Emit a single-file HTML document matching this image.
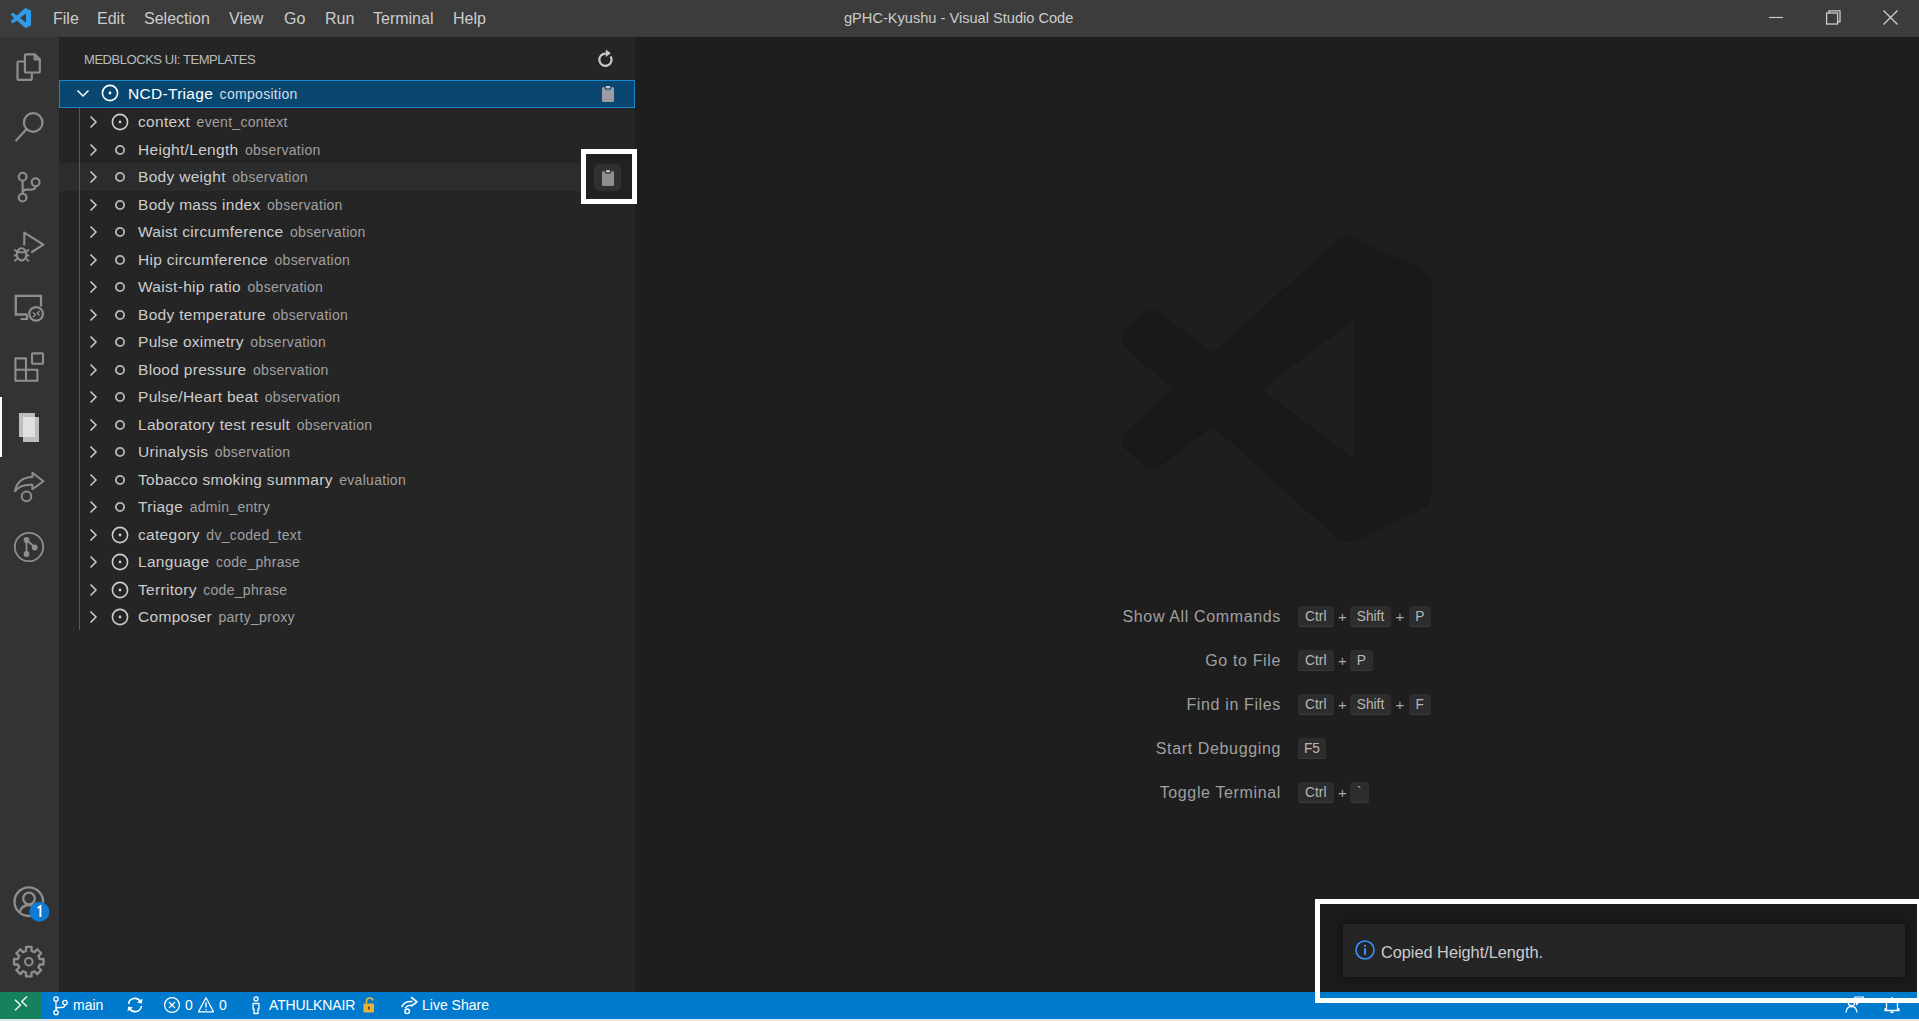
<!DOCTYPE html>
<html><head><meta charset="utf-8">
<style>
*{box-sizing:border-box;margin:0;padding:0}
html,body{width:1919px;height:1021px;overflow:hidden;background:#1e1e1e;font-family:"Liberation Sans",sans-serif;position:relative}
.abs{position:absolute}
.ico{position:absolute}
#title{left:0;top:0;width:1919px;height:37px;background:#3c3c3c}
.menu{position:absolute;top:0;height:37px;line-height:37px;color:#cccccc;font-size:16px;white-space:nowrap}
#act{left:0;top:37px;width:59px;height:955px;background:#333333}
#side{left:59px;top:37px;width:576px;height:955px;background:#252526}
#editor{left:635px;top:37px;width:1284px;height:955px;background:#1e1e1e}
#status{left:0;top:992px;width:1919px;height:26.5px;background:#007acc}
#bottomstrip{left:0;top:1018.5px;width:1919px;height:3px;background:#dfe9ee}
.row{position:absolute;left:59px;width:576px;height:27.5px;white-space:nowrap}
.row.sel{background:#094771;outline:1px solid #1a84cc;outline-offset:-1px;height:28px}
.row.hov{background:#2b2c2e}
.lbl{position:absolute;top:0;line-height:27.5px;font-size:15.5px;letter-spacing:0.3px}
.desc{font-size:14px;margin-left:6.5px;letter-spacing:0.3px}
.sc{position:absolute;left:900px;width:381px;text-align:right;font-size:16px;letter-spacing:0.64px;color:#a0a0a0;white-space:nowrap;line-height:22px}
.key{position:absolute;height:21.5px;line-height:21px;font-size:13.75px;color:#b8b8b8;background:#2d2d2d;border-radius:3.5px;box-shadow:inset 0 -1px 0 #3a3a3a;text-align:center}
.plus{position:absolute;font-size:15px;color:#a8a8a8;line-height:21.5px}
.st{position:absolute;top:992px;height:26.5px;line-height:26.5px;color:#ffffff;font-size:14px;white-space:nowrap}
</style></head><body>
<div id="title" class="abs">
  <svg class="abs" style="left:11px;top:8px" width="20" height="20" viewBox="0 0 24 24"><path fill="#2f9ae8" d="M23.15 2.587L18.21.21a1.494 1.494 0 0 0-1.705.29l-9.46 8.63-4.12-3.128a.999.999 0 0 0-1.276.057L.327 7.261A1 1 0 0 0 .326 8.74L3.899 12 .326 15.26a1 1 0 0 0 .001 1.479L1.65 17.94a.999.999 0 0 0 1.276.057l4.12-3.128 9.46 8.63a1.492 1.492 0 0 0 1.704.29l4.942-2.377A1.5 1.5 0 0 0 24 20.06V3.939a1.5 1.5 0 0 0-.85-1.352zm-5.146 14.861L10.826 12l7.178-5.448v10.896z"/></svg>
  <span class="menu" style="left:53px">File</span>
  <span class="menu" style="left:97px">Edit</span>
  <span class="menu" style="left:144px">Selection</span>
  <span class="menu" style="left:229px">View</span>
  <span class="menu" style="left:284px">Go</span>
  <span class="menu" style="left:325px">Run</span>
  <span class="menu" style="left:373px">Terminal</span>
  <span class="menu" style="left:453px">Help</span>
  <span class="menu" style="left:844px;font-size:14.6px">gPHC-Kyushu - Visual Studio Code</span>
  <svg class="abs" style="left:1768px;top:10px" width="16" height="16" viewBox="0 0 16 16"><path d="M1 7.5 H15" stroke="#cccccc" stroke-width="1.2"/></svg>
  <svg class="abs" style="left:1825px;top:9px" width="17" height="17" viewBox="0 0 17 17"><rect x="1.6" y="4" width="11" height="11" fill="none" stroke="#cccccc" stroke-width="1.3"/><path d="M4 4 V1.8 H15 V12.8 H12.6" fill="none" stroke="#cccccc" stroke-width="1.3"/></svg>
  <svg class="abs" style="left:1882px;top:9px" width="17" height="17" viewBox="0 0 17 17"><path d="M1.5 1.5 L15.5 15.5 M15.5 1.5 L1.5 15.5" stroke="#cccccc" stroke-width="1.4"/></svg>
</div>
<div id="act" class="abs"></div>
<div id="side" class="abs"></div>
<div id="editor" class="abs"></div>
<svg class="abs" style="left:0;top:37px" width="59" height="60" viewBox="0 37 59 60"><path d="M24.9 61.5 H18.6 Q17.5 61.5 17.5 62.6 V78.8 Q17.5 79.9 18.6 79.9 H30.7 Q31.8 79.9 31.8 78.8 V72.6" fill="none" stroke="#8e8e8e" stroke-width="2.2"/><path d="M26 54.3 H34.7 L39.8 59.4 V71.4 Q39.8 72.5 38.7 72.5 H26 Q24.9 72.5 24.9 71.4 V55.4 Q24.9 54.3 26 54.3 Z M34.7 54.3 V59.4 H39.8" fill="none" stroke="#8e8e8e" stroke-width="2.2" stroke-linejoin="round"/></svg>
<svg class="abs" style="left:0;top:97px" width="59" height="60" viewBox="0 97 59 60"><circle cx="33.2" cy="122.5" r="9.3" fill="none" stroke="#8e8e8e" stroke-width="2.2"/><path d="M26.4 129.3 L16.2 140.5" stroke="#8e8e8e" stroke-width="2.2" stroke-linecap="round"/></svg>
<svg class="abs" style="left:0;top:157px" width="59" height="60" viewBox="0 157 59 60"><circle cx="22.6" cy="176.7" r="3.9" fill="none" stroke="#8e8e8e" stroke-width="2.1"/><circle cx="22.6" cy="197.6" r="3.9" fill="none" stroke="#8e8e8e" stroke-width="2.1"/><circle cx="35.6" cy="182.2" r="3.9" fill="none" stroke="#8e8e8e" stroke-width="2.1"/><path d="M22.6 180.6 V193.7 M35.6 186.1 Q35.6 189.6 31.5 189.6 H26.5 Q22.6 189.6 22.6 193.5" fill="none" stroke="#8e8e8e" stroke-width="2.1"/></svg>
<svg class="abs" style="left:0;top:217px" width="59" height="60" viewBox="0 217 59 60"><path d="M24.3 245.5 V232.6 L43.4 244.7 L31.2 252.5" fill="none" stroke="#8e8e8e" stroke-width="2.1" stroke-linejoin="round"/><ellipse cx="21.6" cy="254.4" rx="4.8" ry="6.1" fill="none" stroke="#8e8e8e" stroke-width="2.1"/><path d="M16.8 252.2 H26.4 M14.3 249.6 L16.9 251.6 M28.9 249.6 L26.3 251.6 M14 255.5 H16.8 M26.4 255.5 H29.2 M14.3 261.2 L17.2 258.6 M28.9 261.2 L26 258.6" stroke="#8e8e8e" stroke-width="1.9"/></svg>
<svg class="abs" style="left:0;top:277px" width="59" height="60" viewBox="0 277 59 60"><path d="M27.5 314.5 H15.8 V295.8 H41 V306.5" fill="none" stroke="#8e8e8e" stroke-width="2.3"/><path d="M20.6 319 H27 V315" fill="none" stroke="#8e8e8e" stroke-width="2.2"/><circle cx="36.1" cy="313.9" r="6.8" fill="none" stroke="#8e8e8e" stroke-width="2.2"/><path d="M33.1 312.5 L35.4 314.8 L33.1 317.1 M39.6 311 L37.3 313.3 L39.6 315.6" fill="none" stroke="#8e8e8e" stroke-width="1.4"/></svg>
<svg class="abs" style="left:0;top:337px" width="59" height="60" viewBox="0 337 59 60"><path d="M15.4 358.4 H26 V380.8 H15.4 Z M15.4 369.8 H37.4 V380.8 H26" fill="none" stroke="#8e8e8e" stroke-width="2.1" stroke-linejoin="round"/><rect x="32" y="353.4" width="11" height="10.3" rx="0.8" fill="none" stroke="#8e8e8e" stroke-width="2.1"/></svg>
<div class="abs" style="left:0;top:397px;width:2px;height:60px;background:#ffffff"></div>
<div class="abs" style="left:18.8px;top:412.7px;width:16.2px;height:24px;background:rgba(236,236,236,0.75)"></div><div class="abs" style="left:22.7px;top:417px;width:16.5px;height:24.6px;background:rgba(236,236,236,0.75)"></div>
<svg class="abs" style="left:0;top:457px" width="59" height="60" viewBox="0 457 59 60"><path d="M15 491.2 Q17.5 477.5 32.4 477 V472.8 L43.4 481.3 L32.4 489.2 V484.8 Q20.5 484 15 491.2 Z" fill="none" stroke="#8e8e8e" stroke-width="2" stroke-linejoin="round"/><circle cx="26.5" cy="496.4" r="4.8" fill="none" stroke="#8e8e8e" stroke-width="2"/></svg>
<svg class="abs" style="left:0;top:517px" width="59" height="60" viewBox="0 517 59 60"><circle cx="29" cy="547" r="14.2" fill="none" stroke="#8e8e8e" stroke-width="1.8"/><path d="M26.5 540 V554 M26.5 540 L34.7 547" stroke="#8e8e8e" stroke-width="1.8"/><circle cx="26.5" cy="540" r="2.9" fill="#8e8e8e"/><circle cx="26.5" cy="554" r="2.9" fill="#8e8e8e"/><circle cx="34.7" cy="547.5" r="2.9" fill="#8e8e8e"/></svg>
<svg class="abs" style="left:0;top:872px" width="59" height="60" viewBox="0 872 59 60"><circle cx="28.8" cy="901.7" r="14.3" fill="none" stroke="#8e8e8e" stroke-width="2.3"/><circle cx="29" cy="898.5" r="5.8" fill="none" stroke="#8e8e8e" stroke-width="2.3"/><path d="M19.5 912.5 Q21.5 905 29 905 Q36.5 905 38.5 912.5" fill="none" stroke="#8e8e8e" stroke-width="2.3"/><circle cx="39.4" cy="911.7" r="10" fill="#0e7ad1"/><path d="M37.6 908 L40.4 906.2 V917" fill="none" stroke="#ffffff" stroke-width="1.9"/></svg>
<svg class="abs" style="left:0;top:932px" width="59" height="60" viewBox="0 932 59 60"><path d="M26.14 950.82 L25.97 946.97 L31.63 946.97 L31.46 950.82 L34.61 952.12 L37.21 949.28 L41.22 953.29 L38.38 955.89 L39.68 959.04 L43.53 958.87 L43.53 964.53 L39.68 964.36 L38.38 967.51 L41.22 970.11 L37.21 974.12 L34.61 971.28 L31.46 972.58 L31.63 976.43 L25.97 976.43 L26.14 972.58 L22.99 971.28 L20.39 974.12 L16.38 970.11 L19.22 967.51 L17.92 964.36 L14.07 964.53 L14.07 958.87 L17.92 959.04 L19.22 955.89 L16.38 953.29 L20.39 949.28 L22.99 952.12 Z" fill="none" stroke="#8e8e8e" stroke-width="2.3" stroke-linejoin="round"/><circle cx="28.8" cy="961.7" r="3.8" fill="none" stroke="#8e8e8e" stroke-width="2"/></svg>
<div class="abs" style="left:84px;top:51px;font-size:13px;letter-spacing:-0.45px;color:#bbbbbb;white-space:nowrap;line-height:18px">MEDBLOCKS UI: TEMPLATES</div>
<div class="row sel" style="top:80px"><svg class="ico" style="left:17px;top:7px" width="14" height="12" viewBox="0 0 14 12"><path d="M1.5 3.5 L7 9 L12.5 3.5" fill="none" stroke="#ffffff" stroke-width="1.5"/></svg><svg class="ico" style="left:42px;top:4px" width="18" height="18" viewBox="0 0 18 18"><circle cx="9" cy="9" r="7.6" fill="none" stroke="#ffffff" stroke-width="1.6"/><circle cx="9" cy="9" r="1.4" fill="#ffffff"/></svg><span class="lbl" style="left:69px;color:#ffffff">NCD-Triage<span class="desc" style="color:#d5dde3">composition</span></span></div>
<div class="row" style="top:108.0px"><svg class="ico" style="left:29px;top:7px" width="12" height="14" viewBox="0 0 12 14"><path d="M2.5 1.5 L8 7 L2.5 12.5" fill="none" stroke="#cccccc" stroke-width="1.5"/></svg><svg class="ico" style="left:52px;top:5px" width="18" height="18" viewBox="0 0 18 18"><circle cx="9" cy="9" r="7.6" fill="none" stroke="#cccccc" stroke-width="1.6"/><circle cx="9" cy="9" r="1.4" fill="#cccccc"/></svg><span class="lbl" style="left:79px;color:#cccccc">context<span class="desc" style="color:#a0a0a0">event_context</span></span></div>
<div class="row" style="top:135.5px"><svg class="ico" style="left:29px;top:7px" width="12" height="14" viewBox="0 0 12 14"><path d="M2.5 1.5 L8 7 L2.5 12.5" fill="none" stroke="#cccccc" stroke-width="1.5"/></svg><svg class="ico" style="left:55px;top:8px" width="12" height="12" viewBox="0 0 12 12"><circle cx="6" cy="6" r="4.1" fill="none" stroke="#b8b8b8" stroke-width="1.8"/></svg><span class="lbl" style="left:79px;color:#cccccc">Height/Length<span class="desc" style="color:#a0a0a0">observation</span></span></div>
<div class="row hov" style="top:163.0px"><svg class="ico" style="left:29px;top:7px" width="12" height="14" viewBox="0 0 12 14"><path d="M2.5 1.5 L8 7 L2.5 12.5" fill="none" stroke="#cccccc" stroke-width="1.5"/></svg><svg class="ico" style="left:55px;top:8px" width="12" height="12" viewBox="0 0 12 12"><circle cx="6" cy="6" r="4.1" fill="none" stroke="#b8b8b8" stroke-width="1.8"/></svg><span class="lbl" style="left:79px;color:#cccccc">Body weight<span class="desc" style="color:#a0a0a0">observation</span></span></div>
<div class="row" style="top:190.5px"><svg class="ico" style="left:29px;top:7px" width="12" height="14" viewBox="0 0 12 14"><path d="M2.5 1.5 L8 7 L2.5 12.5" fill="none" stroke="#cccccc" stroke-width="1.5"/></svg><svg class="ico" style="left:55px;top:8px" width="12" height="12" viewBox="0 0 12 12"><circle cx="6" cy="6" r="4.1" fill="none" stroke="#b8b8b8" stroke-width="1.8"/></svg><span class="lbl" style="left:79px;color:#cccccc">Body mass index<span class="desc" style="color:#a0a0a0">observation</span></span></div>
<div class="row" style="top:218.0px"><svg class="ico" style="left:29px;top:7px" width="12" height="14" viewBox="0 0 12 14"><path d="M2.5 1.5 L8 7 L2.5 12.5" fill="none" stroke="#cccccc" stroke-width="1.5"/></svg><svg class="ico" style="left:55px;top:8px" width="12" height="12" viewBox="0 0 12 12"><circle cx="6" cy="6" r="4.1" fill="none" stroke="#b8b8b8" stroke-width="1.8"/></svg><span class="lbl" style="left:79px;color:#cccccc">Waist circumference<span class="desc" style="color:#a0a0a0">observation</span></span></div>
<div class="row" style="top:245.5px"><svg class="ico" style="left:29px;top:7px" width="12" height="14" viewBox="0 0 12 14"><path d="M2.5 1.5 L8 7 L2.5 12.5" fill="none" stroke="#cccccc" stroke-width="1.5"/></svg><svg class="ico" style="left:55px;top:8px" width="12" height="12" viewBox="0 0 12 12"><circle cx="6" cy="6" r="4.1" fill="none" stroke="#b8b8b8" stroke-width="1.8"/></svg><span class="lbl" style="left:79px;color:#cccccc">Hip circumference<span class="desc" style="color:#a0a0a0">observation</span></span></div>
<div class="row" style="top:273.0px"><svg class="ico" style="left:29px;top:7px" width="12" height="14" viewBox="0 0 12 14"><path d="M2.5 1.5 L8 7 L2.5 12.5" fill="none" stroke="#cccccc" stroke-width="1.5"/></svg><svg class="ico" style="left:55px;top:8px" width="12" height="12" viewBox="0 0 12 12"><circle cx="6" cy="6" r="4.1" fill="none" stroke="#b8b8b8" stroke-width="1.8"/></svg><span class="lbl" style="left:79px;color:#cccccc">Waist-hip ratio<span class="desc" style="color:#a0a0a0">observation</span></span></div>
<div class="row" style="top:300.5px"><svg class="ico" style="left:29px;top:7px" width="12" height="14" viewBox="0 0 12 14"><path d="M2.5 1.5 L8 7 L2.5 12.5" fill="none" stroke="#cccccc" stroke-width="1.5"/></svg><svg class="ico" style="left:55px;top:8px" width="12" height="12" viewBox="0 0 12 12"><circle cx="6" cy="6" r="4.1" fill="none" stroke="#b8b8b8" stroke-width="1.8"/></svg><span class="lbl" style="left:79px;color:#cccccc">Body temperature<span class="desc" style="color:#a0a0a0">observation</span></span></div>
<div class="row" style="top:328.0px"><svg class="ico" style="left:29px;top:7px" width="12" height="14" viewBox="0 0 12 14"><path d="M2.5 1.5 L8 7 L2.5 12.5" fill="none" stroke="#cccccc" stroke-width="1.5"/></svg><svg class="ico" style="left:55px;top:8px" width="12" height="12" viewBox="0 0 12 12"><circle cx="6" cy="6" r="4.1" fill="none" stroke="#b8b8b8" stroke-width="1.8"/></svg><span class="lbl" style="left:79px;color:#cccccc">Pulse oximetry<span class="desc" style="color:#a0a0a0">observation</span></span></div>
<div class="row" style="top:355.5px"><svg class="ico" style="left:29px;top:7px" width="12" height="14" viewBox="0 0 12 14"><path d="M2.5 1.5 L8 7 L2.5 12.5" fill="none" stroke="#cccccc" stroke-width="1.5"/></svg><svg class="ico" style="left:55px;top:8px" width="12" height="12" viewBox="0 0 12 12"><circle cx="6" cy="6" r="4.1" fill="none" stroke="#b8b8b8" stroke-width="1.8"/></svg><span class="lbl" style="left:79px;color:#cccccc">Blood pressure<span class="desc" style="color:#a0a0a0">observation</span></span></div>
<div class="row" style="top:383.0px"><svg class="ico" style="left:29px;top:7px" width="12" height="14" viewBox="0 0 12 14"><path d="M2.5 1.5 L8 7 L2.5 12.5" fill="none" stroke="#cccccc" stroke-width="1.5"/></svg><svg class="ico" style="left:55px;top:8px" width="12" height="12" viewBox="0 0 12 12"><circle cx="6" cy="6" r="4.1" fill="none" stroke="#b8b8b8" stroke-width="1.8"/></svg><span class="lbl" style="left:79px;color:#cccccc">Pulse/Heart beat<span class="desc" style="color:#a0a0a0">observation</span></span></div>
<div class="row" style="top:410.5px"><svg class="ico" style="left:29px;top:7px" width="12" height="14" viewBox="0 0 12 14"><path d="M2.5 1.5 L8 7 L2.5 12.5" fill="none" stroke="#cccccc" stroke-width="1.5"/></svg><svg class="ico" style="left:55px;top:8px" width="12" height="12" viewBox="0 0 12 12"><circle cx="6" cy="6" r="4.1" fill="none" stroke="#b8b8b8" stroke-width="1.8"/></svg><span class="lbl" style="left:79px;color:#cccccc">Laboratory test result<span class="desc" style="color:#a0a0a0">observation</span></span></div>
<div class="row" style="top:438.0px"><svg class="ico" style="left:29px;top:7px" width="12" height="14" viewBox="0 0 12 14"><path d="M2.5 1.5 L8 7 L2.5 12.5" fill="none" stroke="#cccccc" stroke-width="1.5"/></svg><svg class="ico" style="left:55px;top:8px" width="12" height="12" viewBox="0 0 12 12"><circle cx="6" cy="6" r="4.1" fill="none" stroke="#b8b8b8" stroke-width="1.8"/></svg><span class="lbl" style="left:79px;color:#cccccc">Urinalysis<span class="desc" style="color:#a0a0a0">observation</span></span></div>
<div class="row" style="top:465.5px"><svg class="ico" style="left:29px;top:7px" width="12" height="14" viewBox="0 0 12 14"><path d="M2.5 1.5 L8 7 L2.5 12.5" fill="none" stroke="#cccccc" stroke-width="1.5"/></svg><svg class="ico" style="left:55px;top:8px" width="12" height="12" viewBox="0 0 12 12"><circle cx="6" cy="6" r="4.1" fill="none" stroke="#b8b8b8" stroke-width="1.8"/></svg><span class="lbl" style="left:79px;color:#cccccc">Tobacco smoking summary<span class="desc" style="color:#a0a0a0">evaluation</span></span></div>
<div class="row" style="top:493.0px"><svg class="ico" style="left:29px;top:7px" width="12" height="14" viewBox="0 0 12 14"><path d="M2.5 1.5 L8 7 L2.5 12.5" fill="none" stroke="#cccccc" stroke-width="1.5"/></svg><svg class="ico" style="left:55px;top:8px" width="12" height="12" viewBox="0 0 12 12"><circle cx="6" cy="6" r="4.1" fill="none" stroke="#b8b8b8" stroke-width="1.8"/></svg><span class="lbl" style="left:79px;color:#cccccc">Triage<span class="desc" style="color:#a0a0a0">admin_entry</span></span></div>
<div class="row" style="top:520.5px"><svg class="ico" style="left:29px;top:7px" width="12" height="14" viewBox="0 0 12 14"><path d="M2.5 1.5 L8 7 L2.5 12.5" fill="none" stroke="#cccccc" stroke-width="1.5"/></svg><svg class="ico" style="left:52px;top:5px" width="18" height="18" viewBox="0 0 18 18"><circle cx="9" cy="9" r="7.6" fill="none" stroke="#cccccc" stroke-width="1.6"/><circle cx="9" cy="9" r="1.4" fill="#cccccc"/></svg><span class="lbl" style="left:79px;color:#cccccc">category<span class="desc" style="color:#a0a0a0">dv_coded_text</span></span></div>
<div class="row" style="top:548.0px"><svg class="ico" style="left:29px;top:7px" width="12" height="14" viewBox="0 0 12 14"><path d="M2.5 1.5 L8 7 L2.5 12.5" fill="none" stroke="#cccccc" stroke-width="1.5"/></svg><svg class="ico" style="left:52px;top:5px" width="18" height="18" viewBox="0 0 18 18"><circle cx="9" cy="9" r="7.6" fill="none" stroke="#cccccc" stroke-width="1.6"/><circle cx="9" cy="9" r="1.4" fill="#cccccc"/></svg><span class="lbl" style="left:79px;color:#cccccc">Language<span class="desc" style="color:#a0a0a0">code_phrase</span></span></div>
<div class="row" style="top:575.5px"><svg class="ico" style="left:29px;top:7px" width="12" height="14" viewBox="0 0 12 14"><path d="M2.5 1.5 L8 7 L2.5 12.5" fill="none" stroke="#cccccc" stroke-width="1.5"/></svg><svg class="ico" style="left:52px;top:5px" width="18" height="18" viewBox="0 0 18 18"><circle cx="9" cy="9" r="7.6" fill="none" stroke="#cccccc" stroke-width="1.6"/><circle cx="9" cy="9" r="1.4" fill="#cccccc"/></svg><span class="lbl" style="left:79px;color:#cccccc">Territory<span class="desc" style="color:#a0a0a0">code_phrase</span></span></div>
<div class="row" style="top:603.0px"><svg class="ico" style="left:29px;top:7px" width="12" height="14" viewBox="0 0 12 14"><path d="M2.5 1.5 L8 7 L2.5 12.5" fill="none" stroke="#cccccc" stroke-width="1.5"/></svg><svg class="ico" style="left:52px;top:5px" width="18" height="18" viewBox="0 0 18 18"><circle cx="9" cy="9" r="7.6" fill="none" stroke="#cccccc" stroke-width="1.6"/><circle cx="9" cy="9" r="1.4" fill="#cccccc"/></svg><span class="lbl" style="left:79px;color:#cccccc">Composer<span class="desc" style="color:#a0a0a0">party_proxy</span></span></div>
<div class="abs" style="left:79px;top:108px;width:1px;height:522px;background:#585858;z-index:2"></div>
<svg class="abs" style="left:594px;top:47px" width="24" height="24" viewBox="594 47 24 24"><path d="M610.6 56.4 A6.1 6.1 0 1 1 605.8 53.6" fill="none" stroke="#c8c8c8" stroke-width="2.2"/><path d="M605.8 49.6 L610.8 53.3 L605.8 57 Z" fill="#c8c8c8"/></svg>
<svg class="abs" style="z-index:3;left:600px;top:84px" width="16" height="19" viewBox="0 0 16 19"><rect x="2" y="3" width="12" height="15" rx="1.6" fill="#9c9ca2"/><rect x="4.6" y="1.2" width="6.8" height="4.6" rx="2.3" fill="#094771"/><rect x="5.8" y="2.1" width="4.4" height="2.3" rx="0.8" fill="#c4c9ce"/></svg>
<div class="abs" style="left:581px;top:149px;width:56px;height:55px;border:5px solid #ffffff;background:#212121;z-index:3"></div>
<div class="abs" style="left:594px;top:164px;width:27px;height:27px;border-radius:5px;background:#2f3031;z-index:3"></div>
<svg class="abs" style="z-index:4;left:600px;top:167.5px" width="16" height="19" viewBox="0 0 16 19"><rect x="2" y="3" width="12" height="15" rx="1.6" fill="#8e8e8e"/><rect x="4.6" y="1.2" width="6.8" height="4.6" rx="2.3" fill="#2f3031"/><rect x="5.8" y="2.1" width="4.4" height="2.3" rx="0.8" fill="#b0b0b0"/></svg>
<svg class="abs" style="left:1122px;top:235.5px" width="310" height="307" viewBox="0 0 24 24" preserveAspectRatio="none"><path fill="#191919" d="M23.15 2.587L18.21.21a1.494 1.494 0 0 0-1.705.29l-9.46 8.63-4.12-3.128a.999.999 0 0 0-1.276.057L.327 7.261A1 1 0 0 0 .326 8.74L3.899 12 .326 15.26a1 1 0 0 0 .001 1.479L1.65 17.94a.999.999 0 0 0 1.276.057l4.12-3.128 9.46 8.63a1.492 1.492 0 0 0 1.704.29l4.942-2.377A1.5 1.5 0 0 0 24 20.06V3.939a1.5 1.5 0 0 0-.85-1.352zm-5.146 14.861L10.826 12l7.178-5.448v10.896z"/></svg>
<div class="sc" style="top:606px">Show All Commands</div>
<div class="key" style="left:1298px;top:605.5px;width:35.5px">Ctrl</div>
<div class="plus" style="left:1338.0px;top:606px">+</div>
<div class="key" style="left:1350px;top:605.5px;width:41px">Shift</div>
<div class="plus" style="left:1395.5px;top:606px">+</div>
<div class="key" style="left:1409px;top:605.5px;width:21.5px">P</div>
<div class="sc" style="top:650px">Go to File</div>
<div class="key" style="left:1298px;top:649.5px;width:35.5px">Ctrl</div>
<div class="plus" style="left:1338.0px;top:650px">+</div>
<div class="key" style="left:1350px;top:649.5px;width:22.5px">P</div>
<div class="sc" style="top:694px">Find in Files</div>
<div class="key" style="left:1298px;top:693.5px;width:35.5px">Ctrl</div>
<div class="plus" style="left:1338.0px;top:694px">+</div>
<div class="key" style="left:1350px;top:693.5px;width:41px">Shift</div>
<div class="plus" style="left:1395.5px;top:694px">+</div>
<div class="key" style="left:1409px;top:693.5px;width:21.5px">F</div>
<div class="sc" style="top:738px">Start Debugging</div>
<div class="key" style="left:1298px;top:737.5px;width:28px">F5</div>
<div class="sc" style="top:782px">Toggle Terminal</div>
<div class="key" style="left:1298px;top:781.5px;width:35.5px">Ctrl</div>
<div class="plus" style="left:1338.0px;top:782px">+</div>
<div class="key" style="left:1350px;top:781.5px;width:18.5px">`</div>
<div id="status" class="abs"></div>
<div id="bottomstrip" class="abs"></div>
<div class="abs" style="left:0;top:992px;width:42px;height:26.5px;background:#16825d"></div>
<svg class="abs" style="left:12px;top:996px" width="18" height="18" viewBox="0 0 18 18"><path d="M3 14.2 L8.5 9 L3 3.8 M15 0.5 L9.7 5.5 L15 10.5" fill="none" stroke="#ffffff" stroke-width="1.3"/></svg>
<svg class="abs" style="left:52px;top:996px" width="18" height="20" viewBox="0 0 18 20"><circle cx="4" cy="3" r="2.2" fill="none" stroke="#fff" stroke-width="1.3"/><circle cx="4" cy="16.5" r="2.2" fill="none" stroke="#fff" stroke-width="1.3"/><circle cx="13" cy="6.5" r="2.2" fill="none" stroke="#fff" stroke-width="1.3"/><path d="M4 5.2 V14.3 M13 8.7 Q13 11.5 9.5 11.5 H6.5 Q4 11.5 4 14" fill="none" stroke="#fff" stroke-width="1.3"/></svg>
<div class="st" style="left:73px">main</div>
<svg class="abs" style="left:125px;top:996px" width="20" height="18" viewBox="0 0 20 18"><path d="M3.5 8 A6.5 6.5 0 0 1 15.5 5.5 M16.5 10 A6.5 6.5 0 0 1 4.5 12.5" fill="none" stroke="#fff" stroke-width="1.6"/><path d="M17.5 2.5 L16.8 7.6 L12 6.5 Z M2.5 15.5 L3.2 10.4 L8 11.5 Z" fill="#fff"/></svg>
<svg class="abs" style="left:163px;top:996px" width="18" height="18" viewBox="0 0 18 18"><circle cx="9" cy="9" r="7.4" fill="none" stroke="#fff" stroke-width="1.3"/><path d="M6 6 L12 12 M12 6 L6 12" stroke="#fff" stroke-width="1.3"/></svg>
<div class="st" style="left:185px">0</div>
<svg class="abs" style="left:197px;top:996px" width="18" height="18" viewBox="0 0 18 18"><path d="M9 1.8 L16.5 15.8 H1.5 Z" fill="none" stroke="#fff" stroke-width="1.3" stroke-linejoin="round"/><path d="M9 6.5 V11.5 M9 13 V14.3" stroke="#fff" stroke-width="1.4"/></svg>
<div class="st" style="left:219px">0</div>
<svg class="abs" style="left:250px;top:996px" width="12" height="20" viewBox="0 0 12 20"><circle cx="6" cy="3" r="2" fill="none" stroke="#fff" stroke-width="1.3"/><path d="M3 7.5 H9 V13 H8 V17.5 H4 V13 H3 Z" fill="none" stroke="#fff" stroke-width="1.3" stroke-linejoin="round"/></svg>
<div class="st" style="left:269px;letter-spacing:-0.15px">ATHULKNAIR</div>
<svg class="abs" style="left:362px;top:996px" width="15" height="18" viewBox="0 0 15 18"><path d="M4.5 7.5 V5 Q4.5 2 7.5 2 Q10.5 2 11 4.5" fill="none" stroke="#e8b53a" stroke-width="1.6"/><rect x="1.5" y="7.5" width="10.5" height="9" rx="1" fill="#e9b13a"/><rect x="6" y="10.5" width="1.6" height="3" fill="#5a4210"/></svg>
<svg class="abs" style="left:400px;top:996px" width="20" height="20" viewBox="0 0 20 20"><path d="M2 10.5 Q4 5 12 5.5 M11.5 1.5 L17 5.8 L11.5 10" fill="none" stroke="#fff" stroke-width="1.6" stroke-linejoin="round" stroke-linecap="round"/><path d="M5 12 Q8 8.5 12.5 9.2" fill="none" stroke="#fff" stroke-width="1.4"/><circle cx="7.2" cy="15.3" r="2.3" fill="none" stroke="#fff" stroke-width="1.5"/></svg>
<div class="st" style="left:422px">Live Share</div>
<svg class="abs" style="left:1845px;top:996px" width="20" height="18" viewBox="0 0 20 18"><circle cx="6.5" cy="6.5" r="3.2" fill="none" stroke="#fff" stroke-width="1.3"/><path d="M1 16.5 Q1.5 10.5 6.5 10.5 Q11.5 10.5 12 16.5" fill="none" stroke="#fff" stroke-width="1.3"/><path d="M10 1 H18.5 V6 H14 L11.5 8.5 V6 H10 Z" fill="none" stroke="#fff" stroke-width="1.2"/></svg>
<svg class="abs" style="left:1883px;top:996px" width="18" height="18" viewBox="0 0 18 18"><path d="M3.5 13 V8 Q3.5 3 9 3 Q14.5 3 14.5 8 V13 H16 V14.5 H2 V13 Z" fill="none" stroke="#fff" stroke-width="1.3" stroke-linejoin="round"/><path d="M7.5 15.5 Q9 17.5 10.5 15.5" fill="none" stroke="#fff" stroke-width="1.3"/><path d="M9 1 V3" stroke="#fff" stroke-width="1.3"/></svg>
<div class="abs" style="left:1320px;top:904px;width:599px;height:88px;background:#1b1b1b"></div>
<div class="abs" style="left:1343px;top:923.5px;width:562px;height:53.5px;background:#252526;box-shadow:0 0 8px rgba(0,0,0,0.5)"></div>
<svg class="abs" style="left:1355px;top:940px" width="20" height="20" viewBox="0 0 20 20"><circle cx="10" cy="10" r="9" fill="none" stroke="#3794ff" stroke-width="1.6"/><rect x="9" y="8.3" width="2" height="6.5" fill="#3794ff"/><circle cx="10" cy="5.8" r="1.1" fill="#3794ff"/></svg>
<div class="abs" style="left:1381px;top:940.5px;font-size:16.3px;line-height:22px;color:#cccccc;white-space:nowrap">Copied Height/Length.</div>
<div class="abs" style="left:1315px;top:899px;width:607px;height:104px;border:5px solid #ffffff;z-index:5"></div>
</body></html>
